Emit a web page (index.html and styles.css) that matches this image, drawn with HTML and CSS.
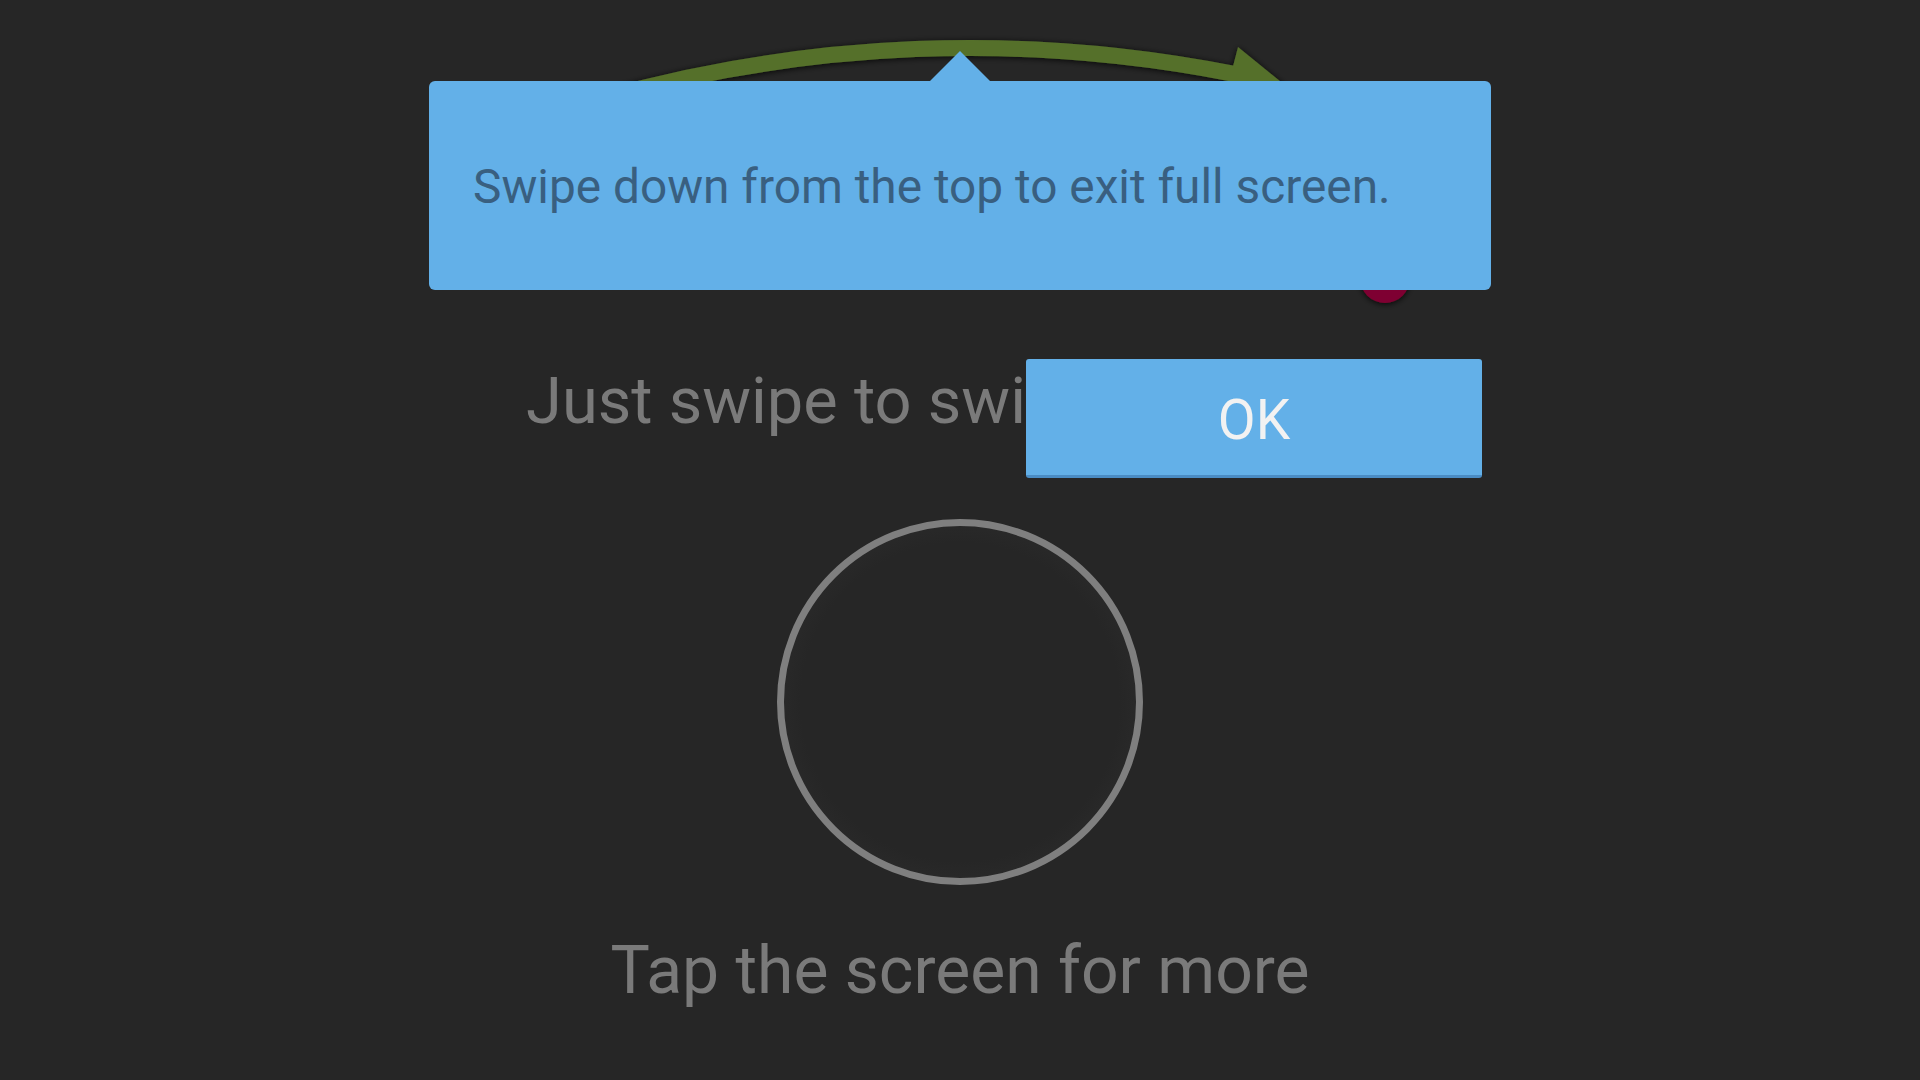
FILE: index.html
```html
<!DOCTYPE html>
<html lang="en">
<head>
<meta charset="utf-8">
<title>Full screen hint</title>
<link rel="stylesheet" href="styles.css">
</head>
<body>
<div class="screen">
  <div class="illustration">
    <svg class="illus-svg" width="1920" height="363" viewBox="0 0 1920 363" xmlns="http://www.w3.org/2000/svg">
      <defs>
        <filter id="sh" x="-10%" y="-50%" width="120%" height="200%">
          <feGaussianBlur in="SourceAlpha" stdDeviation="3"/>
          <feOffset dx="0" dy="1" result="b"/>
          <feFlood flood-color="#000" flood-opacity="0.85"/>
          <feComposite in2="b" operator="in"/>
          <feMerge><feMergeNode/><feMergeNode in="SourceGraphic"/></feMerge>
        </filter>
      </defs>
      <g filter="url(#sh)">
        <path d="M 600 99.3 A 1360 1360 0 0 1 1234 73.9" fill="none" stroke="#55702b" stroke-width="16"/>
        <polygon points="1238,47 1291,90 1224,101" fill="#55702b"/>
      </g>
      <circle cx="1385" cy="278" r="25" fill="#7e0030" filter="url(#sh)"/>
    </svg>
  </div>
  <p class="hint">Just swipe to switch channels</p>
  <div class="ring"></div>
  <p class="tap">Tap the screen for more</p>

  <div class="tooltip">
    <p class="tooltip-text">Swipe down from the top to exit full screen.</p>
  </div>
  <button class="ok">OK</button>
</div>
</body>
</html>
```
FILE: styles.css
```css
html, body {
  margin: 0;
  padding: 0;
  background: #262626;
}

.screen {
  position: relative;
  width: 1920px;
  height: 1080px;
  overflow: hidden;
  display: flex;
  flex-direction: column;
  align-items: center;
  font-family: Roboto, "Noto Sans", sans-serif;
}

.illustration {
  width: 1920px;
  height: 363px;
  flex: none;
}

.illus-svg {
  display: block;
}

.hint {
  margin: 0;
  font-size: 65px;
  line-height: 76px;
  color: #7a7a7a;
  white-space: nowrap;
}

.ring {
  margin-top: 80px;
  width: 352px;
  height: 352px;
  border: 7px solid #7f7f7f;
  border-radius: 50%;
  background: radial-gradient(circle, #262626 0%, #262626 64%, #2e2e2e 86%, #393939 100%);
  flex: none;
}

.tap {
  margin: 48px 0 0;
  font-size: 66px;
  line-height: 76px;
  color: #7a7a7a;
  white-space: nowrap;
}

.tooltip {
  position: absolute;
  left: 429px;
  top: 81px;
  width: 1062px;
  height: 209px;
  box-sizing: border-box;
  padding: 3px 0 0 44px;
  background: #63b0e8;
  border-radius: 6px;
  display: flex;
  align-items: center;
}

.tooltip::before {
  content: "";
  position: absolute;
  left: 501px;
  top: -30px;
  width: 0;
  height: 0;
  border-left: 30px solid transparent;
  border-right: 30px solid transparent;
  border-bottom: 30px solid #63b0e8;
}

.tooltip-text {
  margin: 0;
  font-size: 47.8px;
  line-height: 56px;
  color: #395f80;
  white-space: nowrap;
}

.ok {
  position: absolute;
  left: 1026px;
  top: 359px;
  width: 456px;
  height: 119px;
  margin: 0;
  padding: 6px 0 0;
  border: none;
  border-bottom: 3px solid #4a8cc4;
  border-radius: 3px;
  background: #63b0e8;
  color: #f2f2f2;
  font-family: Roboto, "Noto Sans", sans-serif;
  font-size: 55px;
  line-height: 110px;
  text-align: center;
}
```
